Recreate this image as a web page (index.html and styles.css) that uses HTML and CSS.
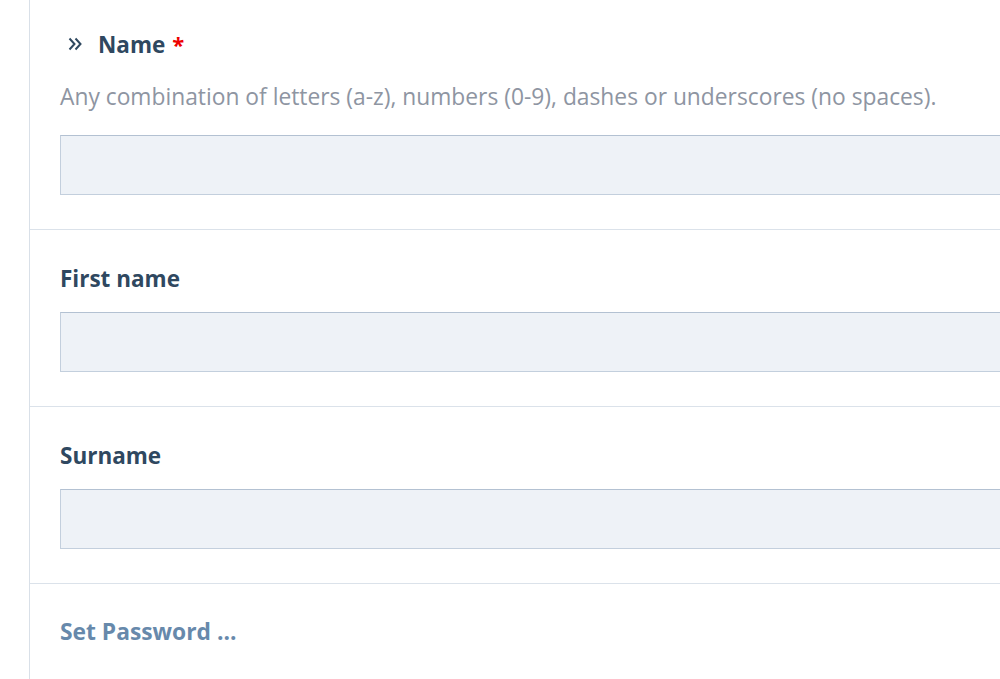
FILE: index.html
```html
<!DOCTYPE html>
<html>
<head>
<meta charset="utf-8">
<link rel="stylesheet" href="styles.css">
</head>
<body>
<div class="page">
  <div class="panel">
    <section class="field field-first">
      <div class="label-row">
        <svg class="chev" width="14" height="14" viewBox="0 0 14 14"><path d="M1.5 1.5 L6.5 7 L1.5 12.5 M7.5 1.5 L12.5 7 L7.5 12.5" fill="none" stroke="#2f4860" stroke-width="2"/></svg>
        <span class="label">Name</span><span class="req">*</span>
      </div>
      <p class="desc">Any combination of letters (a-z), numbers (0-9), dashes or underscores (no spaces).</p>
      <div class="input"></div>
    </section>
    <section class="field">
      <div class="label-row"><span class="label">First name</span></div>
      <div class="input"></div>
    </section>
    <section class="field">
      <div class="label-row"><span class="label">Surname</span></div>
      <div class="input"></div>
    </section>
    <section class="field field-link">
      <a class="link">Set Password …</a>
    </section>
  </div>
</div>
</body>
</html>
```
FILE: styles.css
```css
html, body { margin: 0; padding: 0; background: #fff; }
body { font-family: "Open Sans", "Noto Sans", sans-serif; width: 1000px; height: 679px; overflow: hidden; }
.page { padding-left: 29px; }
.panel { border-left: 1px solid #d9e0e8; min-height: 679px; overflow: hidden; }
.field { padding: 33px 0 34px 30px; border-bottom: 1px solid #dbe2ea; }
.field-first { padding-top: 29px; }
.label-row { display: flex; align-items: center; height: 30px; margin-bottom: 19px; }
.chev { margin: 0 16px 0 8px; }
.label { font-size: 22.5px; font-weight: 700; color: #2f4860; }
.req { color: #e00; font-size: 22px; font-weight: 700; margin-left: 7px; }
.desc { margin: 0 0 23px; padding-top: 4px; font-size: 22.8px; color: #8e95a2; line-height: 30px; white-space: nowrap; }
.input { height: 58px; background: #eef2f7; border: 1px solid #c3cfdd; border-top-color: #b3c1d2; border-right: none; }
.field-link { border-bottom: none; }
.link { font-size: 22.8px; font-weight: 700; color: #6789ab; display: block; height: 30px; line-height: 30px; }
```
